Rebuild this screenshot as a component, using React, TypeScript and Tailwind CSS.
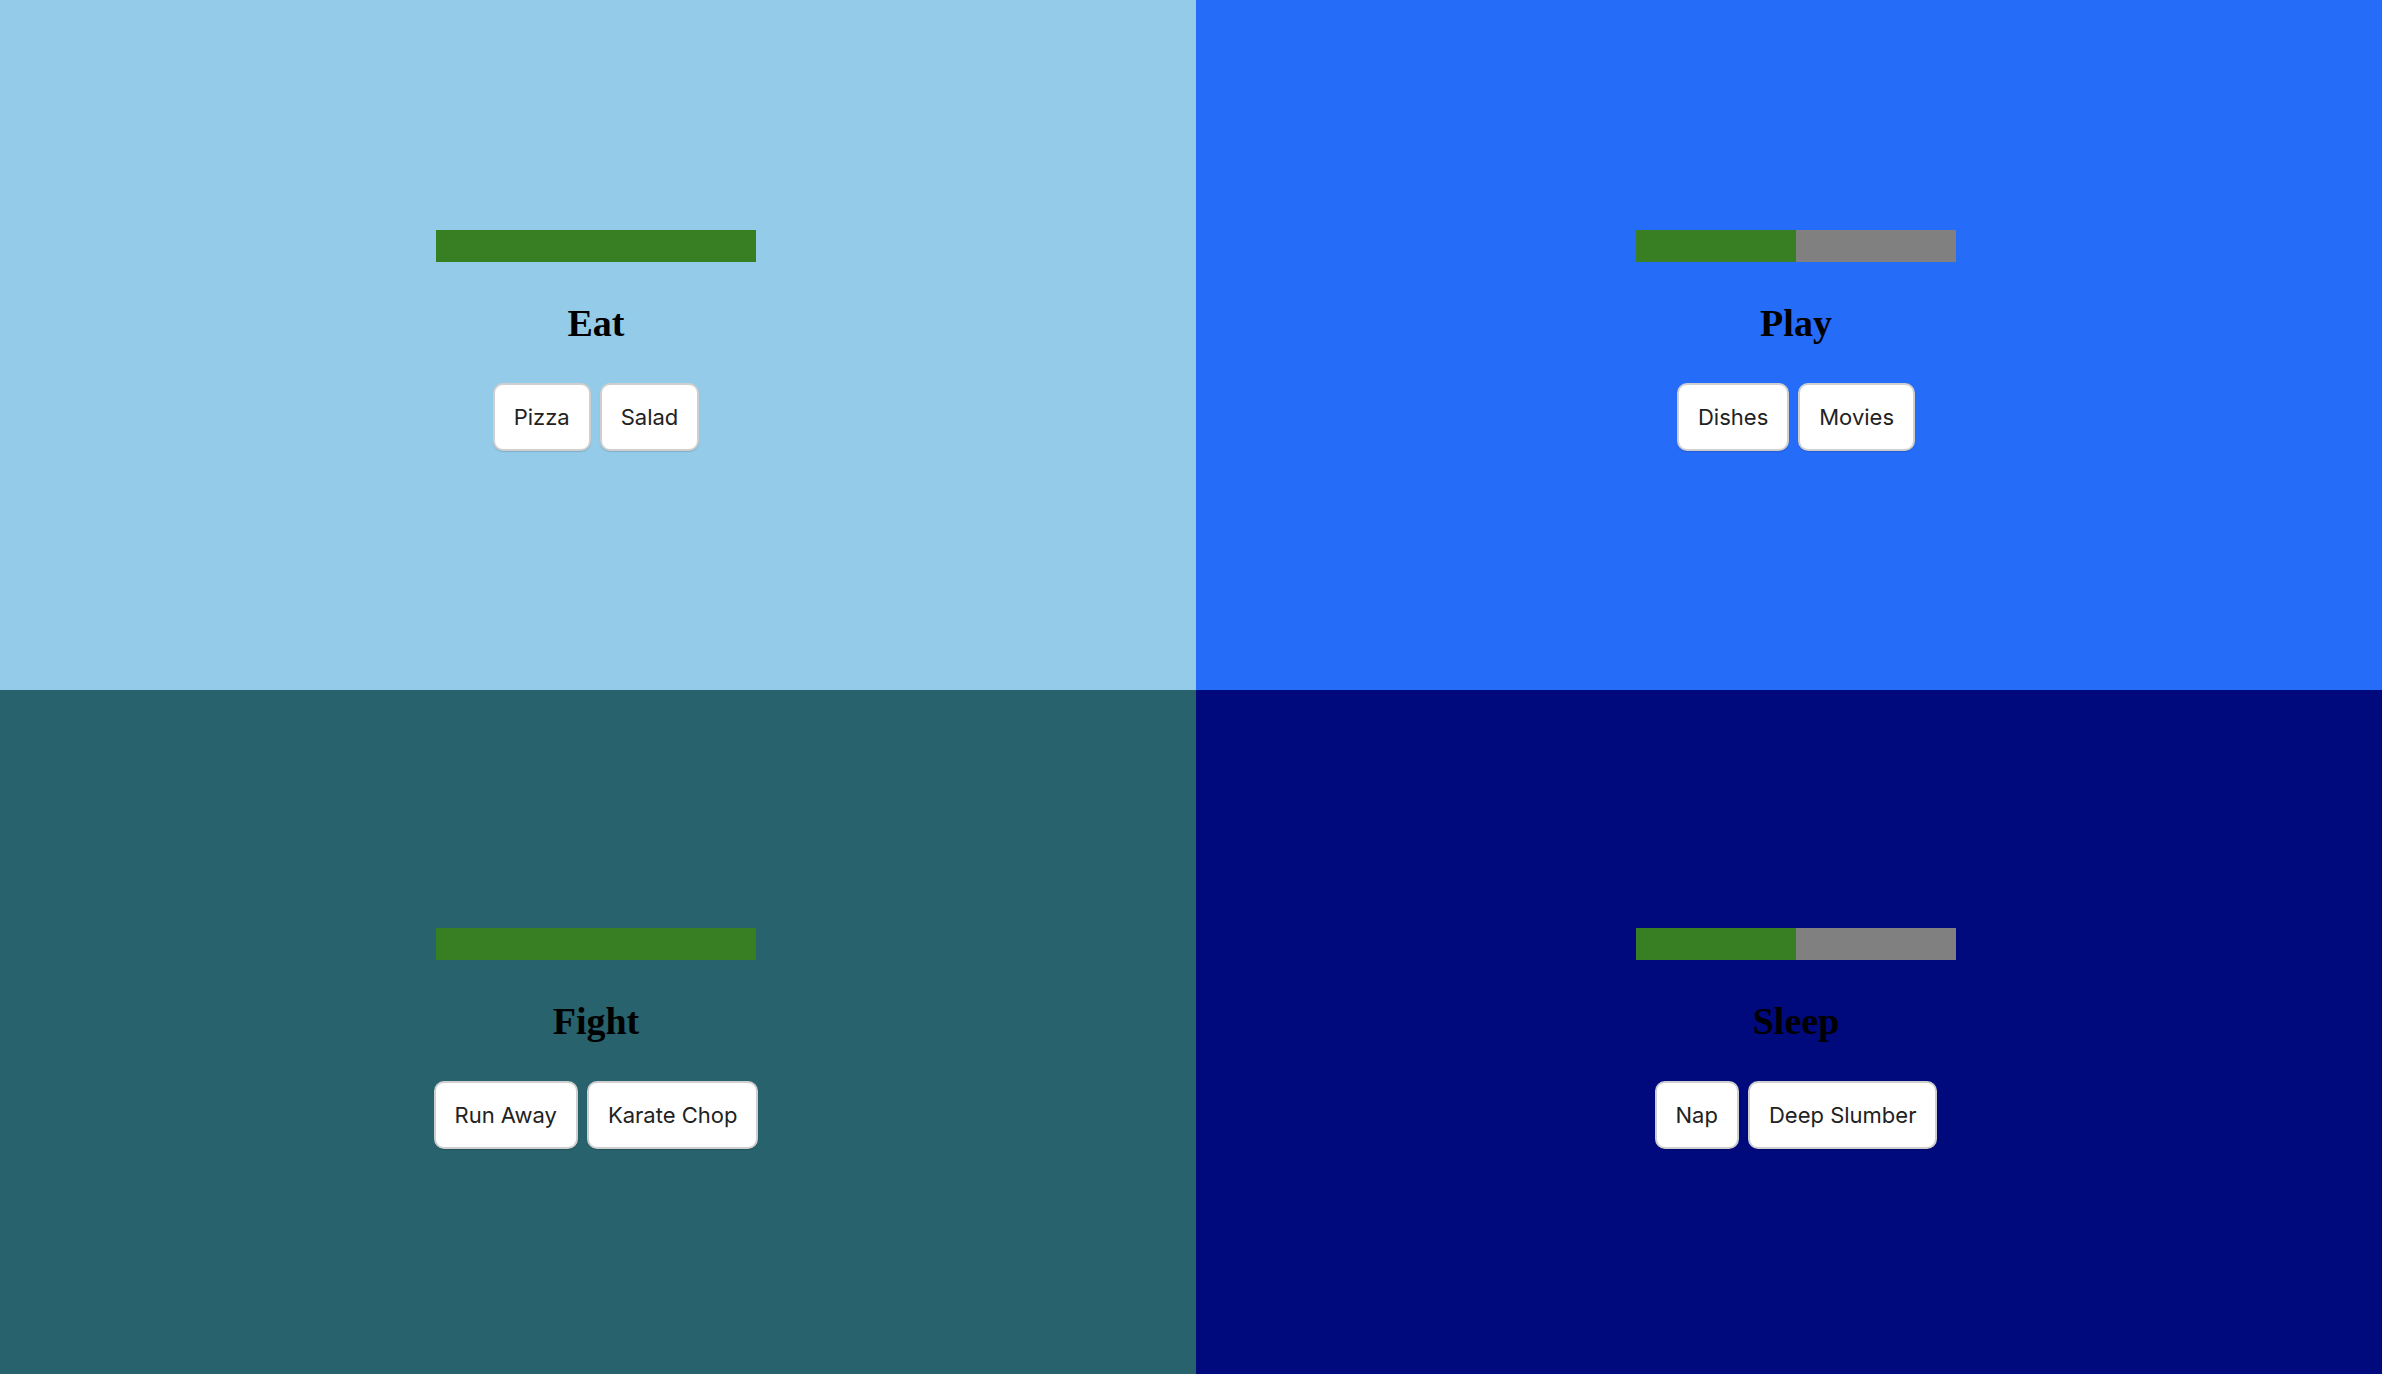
import React from 'react';

type Quad = {
  title: string;
  bg: string;
  fill: number;
  options: string[];
  top: string;
  inner: string;
};

const quads: Quad[] = [
  { title: 'Eat', bg: 'bg-[#94cbe9]', fill: 100, options: ['Pizza', 'Salad'], top: 'pt-[230px]', inner: 'w-[1192px]' },
  { title: 'Play', bg: 'bg-[#256cf8]', fill: 50, options: ['Dishes', 'Movies'], top: 'pt-[230px]', inner: 'w-[1200px]' },
  { title: 'Fight', bg: 'bg-[#27626d]', fill: 100, options: ['Run Away', 'Karate Chop'], top: 'pt-[238px]', inner: 'w-[1192px]' },
  { title: 'Sleep', bg: 'bg-[#000a7d]', fill: 50, options: ['Nap', 'Deep Slumber'], top: 'pt-[238px]', inner: 'w-[1200px]' },
];

const App: React.FC = () => {
  return (
    <div className="w-[2382px] h-[1374px] grid grid-cols-[1196px_1186px] grid-rows-[690px_684px] overflow-hidden">
      {quads.map((q) => (
        <div key={q.title} className={`${q.bg} overflow-hidden`}>
          <div className={`${q.inner} ${q.top} flex flex-col items-center`}>
            {/* Progress bar */}
            <div className="w-[320px] h-[32px] bg-[#808080] flex">
              <div className="h-full bg-[#387e22]" style={{ width: `${q.fill}%` }} />
            </div>

            {/* Title */}
            <h1 className="mt-[40px] text-[38px] leading-[42px] font-bold text-black font-['Liberation_Serif',serif]">
              {q.title}
            </h1>

            {/* Options */}
            <div className="mt-[39px] flex gap-[9px]">
              {q.options.map((o) => (
                <button
                  key={o}
                  className="bg-white border-2 border-[#cfcfcf] rounded-[10px] px-[19px] py-[19px] text-[22px] leading-[26px] text-[#222] font-['Inter',sans-serif] shadow-[0_1px_1px_rgba(0,0,0,0.15)]"
                >
                  {o}
                </button>
              ))}
            </div>
          </div>
        </div>
      ))}
    </div>
  );
};

export default App;
